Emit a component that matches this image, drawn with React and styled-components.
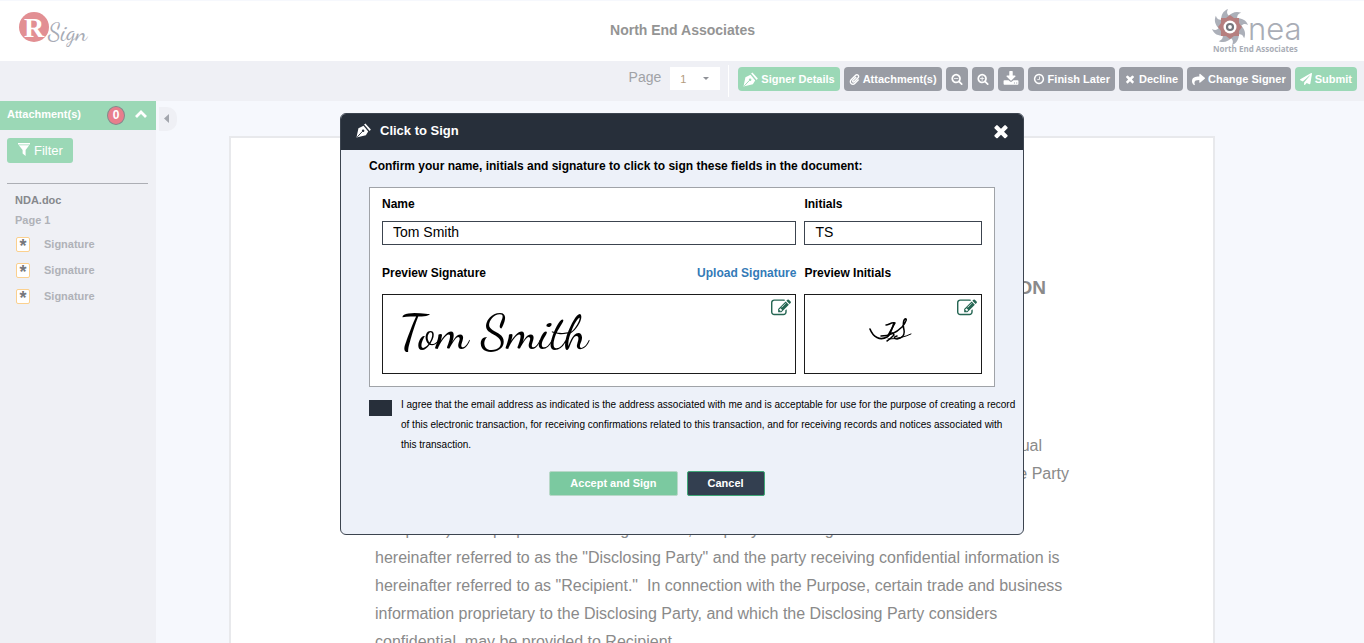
import React, { useState } from "react";
import styled, { createGlobalStyle } from "styled-components";
import { FaPaperclip, FaShare, FaPaperPlane } from "react-icons/fa";

const GlobalStyle = createGlobalStyle`
    * {
        box-sizing: border-box;
    }
    body {
        margin: 0;
        background: #f6f8fd;
        font-family: "Liberation Sans", Arial, sans-serif;
        overflow: hidden;
    }
    button, input, select {
        font-family: inherit;
    }
`;

const paths = {
    times: "M1490 1322q0 40-28 68l-136 136q-28 28-68 28t-68-28l-294-294-294 294q-28 28-68 28t-68-28l-136-136q-28-28-28-68t28-68l294-294-294-294q-28-28-28-68t28-68l136-136q28-28 68-28t68 28l294 294 294-294q28-28 68-28t68 28l136 136q28 28 28 68t-28 68l-294 294 294 294q28 28 28 68z",
    zoomOut: "M1088 800v64q0 13-9.5 22.5t-22.5 9.5h-576q-13 0-22.5-9.5t-9.5-22.5v-64q0-13 9.5-22.5t22.5-9.5h576q13 0 22.5 9.5t9.5 22.5zm128 32q0-185-131.5-316.5t-316.5-131.5-316.5 131.5-131.5 316.5 131.5 316.5 316.5 131.5 316.5-131.5 131.5-316.5zm512 832q0 53-37.5 90.5t-90.5 37.5q-54 0-90-38l-343-342q-179 124-399 124-143 0-273.5-55.5t-225-150-150-225-55.5-273.5 55.5-273.5 150-225 225-150 273.5-55.5 273.5 55.5 225 150 150 225 55.5 273.5q0 220-124 399l343 343q37 37 37 90z",
    zoomIn: "M1088 800v64q0 13-9.5 22.5t-22.5 9.5h-224v224q0 13-9.5 22.5t-22.5 9.5h-64q-13 0-22.5-9.5t-9.5-22.5v-224h-224q-13 0-22.5-9.5t-9.5-22.5v-64q0-13 9.5-22.5t22.5-9.5h224v-224q0-13 9.5-22.5t22.5-9.5h64q13 0 22.5 9.5t9.5 22.5v224h224q13 0 22.5 9.5t9.5 22.5zm128 32q0-185-131.5-316.5t-316.5-131.5-316.5 131.5-131.5 316.5 131.5 316.5 316.5 131.5 316.5-131.5 131.5-316.5zm512 832q0 53-37.5 90.5t-90.5 37.5q-54 0-90-38l-343-342q-179 124-399 124-143 0-273.5-55.5t-225-150-150-225-55.5-273.5 55.5-273.5 150-225 225-150 273.5-55.5 273.5 55.5 225 150 150 225 55.5 273.5q0 220-124 399l343 343q37 37 37 90z",
    clock: "M1024 544v448q0 14-9 23t-23 9h-320q-14 0-23-9t-9-23v-64q0-14 9-23t23-9h224v-352q0-14 9-23t23-9h64q14 0 23 9t9 23zm416 352q0-148-73-273t-198-198-273-73-273 73-198 198-73 273 73 273 198 198 273 73 273-73 198-198 73-273zm224 0q0 209-103 385.5t-279.5 279.5-385.5 103-385.5-103-279.5-279.5-103-385.5 103-385.5 279.5-279.5 385.5-103 385.5 103 279.5 279.5 103 385.5z",
    download: "M1344 1344q0-26-19-45t-45-19-45 19-19 45 19 45 45 19 45-19 19-45zm256 0q0-26-19-45t-45-19-45 19-19 45 19 45 45 19 45-19 19-45zm128-224v320q0 40-28 68t-68 28h-1472q-40 0-68-28t-28-68v-320q0-40 28-68t68-28h465l135 136q58 56 136 56t136-56l136-136h464q40 0 68 28t28 68zm-325-569q17 41-14 70l-448 448q-18 19-45 19t-45-19l-448-448q-31-29-14-70 17-39 59-39h256v-448q0-26 19-45t45-19h256q26 0 45 19t19 45v448h256q42 0 59 39z",
    edit: "M888 1184l116-116-152-152-116 116v56h96v96h56zm440-720q-16-16-33 1l-350 350q-17 17-1 33t33-1l350-350q17-17 1-33zm80 594v190q0 119-84.5 203.5t-203.5 84.5h-832q-119 0-203.5-84.5t-84.5-203.5v-832q0-119 84.5-203.5t203.5-84.5h832q63 0 117 25 15 7 18 23 3 17-9 29l-49 49q-14 14-32 8-23-6-45-6h-832q-66 0-113 47t-47 113v832q0 66 47 113t113 47h832q66 0 113-47t47-113v-126q0-13 9-22l64-64q15-15 35-7t20 29zm-96-738l288 288-672 672h-288v-288zm444 132l-92 92-288-288 92-92q28-28 68-28t68 28l152 152q28 28 28 68t-28 68z",
};

const Icon = ({ name, size = 12 }) => (
    <svg width={size} height={size} viewBox="0 0 1792 1792" fill="currentColor" aria-hidden="true">
        <path d={paths[name]} />
    </svg>
);

const PenIcon = ({ size = 16, ink }) => (
    <svg width={size} height={size} viewBox="0 0 16 16" aria-hidden="true">
        <path d="M0.5 15.5L2.6 5.5L8 3L13 9L10.5 13L0.5 15.5Z" fill="#fff" />
        <path d="M8.6 1.6L10 0.4L15.8 7L14.6 8.4Z" fill="#fff" />
        <path d="M1.4 14.8L7 8.8" stroke={ink} strokeWidth="1" />
        <circle cx="7.6" cy="8.2" r="1.3" fill={ink} />
    </svg>
);

const FilterIcon = () => (
    <svg width="12" height="13" viewBox="0 0 12 13" fill="#fff" aria-hidden="true">
        <path d="M0 0H12V1.5H0ZM0.8 2.3H11.2L7.6 7V13L4.6 10.6V7Z" />
    </svg>
);

const RSignLogo = () => (
    <svg width="70" height="46" viewBox="0 0 70 46" role="img" aria-label="RSign">
        <circle cx="15" cy="19" r="15" fill="#e28f93" />
        <text x="5" y="29" fontFamily="Liberation Serif" fontWeight="700" fontSize="28" fill="#fff">R</text>
        <text x="29" y="32" fontFamily="Dancing Script, cursive" fontSize="24" fill="#a7abb5">Sign</text>
    </svg>
);

const blades = [0, 45, 90, 135, 180, 225, 270, 315];

const NeaLogo = () => (
    <svg width="96" height="48" viewBox="0 0 96 48" role="img" aria-label="nea North End Associates">
        <g transform="translate(18 20)">
            {blades.map((angle) => (
                <path key={angle} d="M-9 -6C-9 -12 -7 -16 -2 -18C-4 -14 -3 -11 4 -9L0 0Z" fill="#acb0b9" transform={`rotate(${angle})`} />
            ))}
            <path d="M0 -12L4 -9L9 -9L9 -4L12 0L9 4L9 9L4 9L0 12L-4 9L-9 9L-9 4L-12 0L-9 -4L-9 -9L-4 -9Z" fill="#b67f7f" />
            <circle r="6.5" fill="#fff" />
            <circle r="3" fill="none" stroke="#74777d" strokeWidth="2.2" />
        </g>
        <text x="36" y="33" fontFamily="Inter, sans-serif" fontWeight="300" fontSize="31" fill="#a9adb6">nea</text>
        <text x="1" y="45" fontFamily="Open Sans, sans-serif" fontWeight="700" fontSize="8" fill="#a9adb6">North End Associates</text>
    </svg>
);

const InitialsMark = () => (
    <svg width="44" height="26" viewBox="0 0 44 26" fill="none" stroke="#000" strokeLinecap="round" strokeLinejoin="round" role="img" aria-label="TS">
        <path d="M1 11C4 19 11 23 18 19C22 16 23 10 25 5" strokeWidth="1.6" />
        <path d="M17 7C20 7 22 4 26 5C24 9 20 15 19 18C22 14 24 14 25 17C22 20 20 22 18 23" strokeWidth="1.5" />
        <path d="M12 18C20 18 27 15 33 9C38 3 38 0 36 1C34 2 34 8 35 12C36 18 33 20 28 21C25 21 24 19 28 18" strokeWidth="1.5" />
        <path d="M19 21C27 21 36 19 42 16" strokeWidth="1" />
    </svg>
);

const App = () => {
    const [name, setName] = useState("Tom Smith");
    const [initials, setInitials] = useState("TS");
    const [agreed, setAgreed] = useState(false);

    return (
        <Page>
            <GlobalStyle />
            <Header>
                <RSignLogo />
                <Company>North End Associates</Company>
                <NeaLogo />
            </Header>
            <Toolbar>
                <PageLabel htmlFor="page">Page</PageLabel>
                <PagePicker>
                    <select id="page" defaultValue="1">
                        <option>1</option>
                    </select>
                    <Caret />
                </PagePicker>
                <Divider />
                <ToolButton $green><PenIcon size={15} ink="#9bd8b6" />Signer Details</ToolButton>
                <ToolButton><FaPaperclip size={11} />Attachment(s)</ToolButton>
                <ToolButton aria-label="Zoom out"><Icon name="zoomOut" /></ToolButton>
                <ToolButton aria-label="Zoom in"><Icon name="zoomIn" /></ToolButton>
                <ToolButton aria-label="Download"><Icon name="download" size={16} /></ToolButton>
                <ToolButton><Icon name="clock" />Finish Later</ToolButton>
                <ToolButton><Icon name="times" />Decline</ToolButton>
                <ToolButton><FaShare size={13} />Change Signer</ToolButton>
                <ToolButton $green><FaPaperPlane size={12} />Submit</ToolButton>
            </Toolbar>
            <Main>
                <Sidebar>
                    <SidebarHead>
                        <span>Attachment(s)</span>
                        <Badge>0</Badge>
                        <svg width="12" height="8" viewBox="0 0 12 8" fill="none" stroke="#fff" strokeWidth="2.8" aria-hidden="true">
                            <path d="M1 7L6 2L11 7" />
                        </svg>
                    </SidebarHead>
                    <FilterButton><FilterIcon />Filter</FilterButton>
                    <Rule />
                    <FileName>NDA.doc</FileName>
                    <PageName>Page 1</PageName>
                    <FieldList>
                        {[1, 2, 3].map((field) => (
                            <li key={field}><Star>*</Star>Signature</li>
                        ))}
                    </FieldList>
                </Sidebar>
                <Collapse aria-label="Collapse sidebar">
                    <svg width="5" height="9" viewBox="0 0 5 9" fill="#a3a6ad" aria-hidden="true"><path d="M5 0V9L0 4.5Z" /></svg>
                </Collapse>
                <Viewer>
                    <Sheet>
                        <h1>INFORMATION</h1>
                        <LineEnd $inset={171}>mutual</LineEnd>
                        <LineEnd $inset={144}>the Party</LineEnd>
                        <p> </p>
                        <p>"Purpose").  For purposes of this Agreement, the party disclosing confidential information is</p>
                        <p>hereinafter referred to as the "Disclosing Party" and the party receiving confidential information is</p>
                        <p>hereinafter referred to as "Recipient."  In connection with the Purpose, certain trade and business</p>
                        <p>information proprietary to the Disclosing Party, and which the Disclosing Party considers</p>
                        <p>confidential, may be provided to Recipient.</p>
                    </Sheet>
                </Viewer>
            </Main>

            <Dialog role="dialog" aria-labelledby="dialog-title">
                <DialogHead>
                    <PenIcon size={15} ink="#272f3a" />
                    <h2 id="dialog-title">Click to Sign</h2>
                    <CloseButton aria-label="Close"><Icon name="times" size={20} /></CloseButton>
                </DialogHead>
                <DialogBody>
                    <Intro>Confirm your name, initials and signature to click to sign these fields in the document:</Intro>
                    <Fields>
                        <FieldLabel as="label" htmlFor="name">Name</FieldLabel>
                        <FieldLabel as="label" htmlFor="initials">Initials</FieldLabel>
                        <TextInput id="name" value={name} onChange={(e) => setName(e.target.value)} />
                        <TextInput id="initials" value={initials} onChange={(e) => setInitials(e.target.value)} />
                        <FieldLabel $preview>Preview Signature<a href="#upload">Upload Signature</a></FieldLabel>
                        <FieldLabel $preview>Preview Initials</FieldLabel>
                        <Preview>
                            <Signature>{name}</Signature>
                            <EditButton aria-label="Edit signature"><Icon name="edit" size={20} /></EditButton>
                        </Preview>
                        <Preview $center>
                            <InitialsMark />
                            <EditButton aria-label="Edit initials"><Icon name="edit" size={20} /></EditButton>
                        </Preview>
                    </Fields>
                    <Agree>
                        <input id="agree" type="checkbox" checked={agreed} onChange={() => setAgreed(!agreed)} />
                        <label htmlFor="agree">
                            I agree that the email address as indicated is the address associated with me and is acceptable for use for the purpose of creating a record of this electronic transaction, for receiving confirmations related to this transaction, and for receiving records and notices associated with this transaction.
                        </label>
                    </Agree>
                    <Actions>
                        <ActionButton $primary>Accept and Sign</ActionButton>
                        <ActionButton>Cancel</ActionButton>
                    </Actions>
                </DialogBody>
            </Dialog>
        </Page>
    );
};

const Page = styled.div`
    display: flex;
    flex-direction: column;
    height: 100vh;
    padding-top: 1px;
`;

const Header = styled.header`
    display: grid;
    grid-template-columns: 1fr auto 1fr;
    align-items: center;
    flex: none;
    height: 60px;
    padding: 0 56px 0 19px;
    background: #fff;
    > :last-child {
        justify-self: end;
    }
`;

const Company = styled.div`
    padding: 0 0 3px 38px;
    color: #949494;
    font-size: 14px;
    font-weight: 700;
`;

const Toolbar = styled.div`
    display: flex;
    justify-content: flex-end;
    gap: 4px;
    flex: none;
    height: 40px;
    padding: 6px 7px 0 0;
    background: #eff0f5;
`;

const PageLabel = styled.label`
    margin-right: 5px;
    color: #a0a2a6;
    font-size: 14px;
    line-height: 20px;
`;

const PagePicker = styled.div`
    display: grid;
    align-items: center;
    width: 50px;
    height: 23px;
    > * {
        grid-area: 1 / 1;
    }
    select {
        appearance: none;
        width: 100%;
        height: 100%;
        padding: 0 10px;
        border: 0;
        border-radius: 0;
        background: #fff;
        color: #b39b7c;
        font-size: 11px;
    }
`;

const Caret = styled.span`
    justify-self: end;
    margin-right: 11px;
    border: 3px solid transparent;
    border-top-color: #8f9197;
    border-bottom: 0;
    pointer-events: none;
`;

const Divider = styled.span`
    width: 1px;
    height: 32px;
    margin: -2px 5px 0 4px;
    background: #fff;
`;

const ToolButton = styled.button`
    display: flex;
    align-items: center;
    gap: 3px;
    height: 24px;
    padding: 0 5px;
    border: 0;
    border-radius: 4px;
    background: ${(props) => (props.$green ? "#9bd8b6" : "#999ca4")};
    color: #fff;
    font-size: 11px;
    font-weight: 700;
    white-space: nowrap;
`;

const Main = styled.main`
    display: flex;
    align-items: flex-start;
    flex: 1;
    min-height: 0;
`;

const Sidebar = styled.aside`
    display: flex;
    flex-direction: column;
    flex: none;
    width: 156px;
    height: 100%;
    background: #eff0f5;
    color: #b0b2b8;
    font-size: 11px;
    font-weight: 700;
`;

const SidebarHead = styled.div`
    display: flex;
    align-items: center;
    height: 29px;
    padding: 0 9px 3px 7px;
    background: #9bd8b6;
    color: #fff;
    span:first-child {
        flex: 1;
    }
`;

const Badge = styled.span`
    width: 18px;
    height: 19px;
    margin: 3px 10px 0 0;
    border: 1px solid #85888c;
    border-radius: 50%;
    background: #e87e8c;
    font-size: 12px;
    line-height: 17px;
    text-align: center;
`;

const FilterButton = styled.button`
    display: flex;
    align-items: center;
    gap: 4px;
    align-self: flex-start;
    height: 25px;
    margin: 8px 0 0 7px;
    padding: 0 10px 0 11px;
    border: 0;
    border-radius: 3px;
    background: #9bd8b6;
    color: #fff;
    font-size: 13px;
    svg {
        margin-bottom: 3px;
    }
`;

const Rule = styled.hr`
    width: 141px;
    margin: 20px 0 6px 7px;
    border: 0;
    border-top: 1px solid #acaeb4;
`;

const FileName = styled.div`
    padding-left: 15px;
    color: #86888c;
    line-height: 20px;
`;

const PageName = styled.div`
    padding-left: 15px;
    line-height: 20px;
`;

const FieldList = styled.ul`
    margin: 0;
    padding: 1px 0 0 16px;
    list-style: none;
    li {
        display: flex;
        align-items: center;
        gap: 14px;
        height: 26px;
    }
`;

const Star = styled.span`
    width: 14px;
    height: 15px;
    border: 1px solid #fbd08e;
    border-radius: 2px;
    background: #fff;
    color: #75777b;
    font-size: 18px;
    line-height: 16px;
    text-align: center;
`;

const Collapse = styled.button`
    display: flex;
    align-items: center;
    flex: none;
    width: 18px;
    height: 24px;
    margin: 6px 0 0 3px;
    padding: 0 0 2px 5px;
    border: 0;
    border-radius: 0 10px 10px 0;
    background: #eff0f5;
`;

const Viewer = styled.div`
    flex: 1;
    height: 100%;
    padding: 35px 149px 0 52px;
    overflow: hidden;
`;

const Sheet = styled.article`
    height: 100%;
    padding: 138px 0 0 144px;
    border: 2px solid #e8e9ec;
    border-bottom: 0;
    background: #fff;
    color: #8a8a8a;
    overflow: hidden;
    h1 {
        margin: 0 167px 132px 0;
        font-size: 19px;
        line-height: 24px;
        text-align: right;
    }
    p {
        margin: 0;
        font-size: 16px;
        line-height: 28px;
        white-space: pre;
    }
`;

const LineEnd = styled.p`
    padding-right: ${(props) => props.$inset}px;
    text-align: right;
`;

const Dialog = styled.section`
    position: fixed;
    top: 113px;
    left: 50%;
    width: 684px;
    margin-left: -342px;
    border: 1px solid #3c444f;
    border-radius: 6px;
    background: #edf1f9;
    color: #000;
    overflow: hidden;
`;

const DialogHead = styled.div`
    display: flex;
    align-items: center;
    gap: 9px;
    height: 36px;
    padding: 0 12px 3px 15px;
    background: #272f3a;
    color: #fff;
    h2 {
        flex: 1;
        margin: 0;
        font-size: 13px;
    }
`;

const CloseButton = styled.button`
    padding: 0;
    border: 0;
    background: none;
    color: #fff;
    line-height: 0;
`;

const DialogBody = styled.div`
    padding: 6px 28px 38px;
`;

const Intro = styled.p`
    margin: 0 0 11px;
    font-size: 12px;
    font-weight: 700;
    line-height: 20px;
`;

const Fields = styled.div`
    display: grid;
    grid-template-columns: 7fr 3fr;
    column-gap: 8px;
    padding: 6px 12px 12px;
    border: 1px solid #a0a3a8;
    background: #fff;
`;

const FieldLabel = styled.div`
    display: flex;
    justify-content: space-between;
    height: ${(props) => (props.$preview ? "49px" : "27px")};
    padding-top: ${(props) => (props.$preview ? "18px" : "0")};
    font-size: 12px;
    font-weight: 700;
    line-height: 20px;
    a {
        color: #337ab7;
        text-decoration: none;
    }
`;

const TextInput = styled.input`
    width: 100%;
    height: 24px;
    min-width: 0;
    padding: 0 10px 2px;
    border: 1px solid #3c444f;
    border-radius: 0;
    background: #fff;
    color: #000;
    font-size: 14px;
    outline: none;
`;

const Preview = styled.div`
    position: relative;
    display: flex;
    align-items: center;
    justify-content: ${(props) => (props.$center ? "center" : "flex-start")};
    height: 80px;
    padding: ${(props) => (props.$center ? "0 5px 6px 0" : "0 16px 4px")};
    border: 1px solid #1b1b1b;
`;

const Signature = styled.span`
    font-family: "Dancing Script", "Liberation Serif", cursive;
    font-size: 49px;
`;

const EditButton = styled.button`
    position: absolute;
    top: 3px;
    right: 4px;
    padding: 0;
    border: 0;
    background: none;
    color: #256653;
    line-height: 0;
`;

const Agree = styled.div`
    display: flex;
    align-items: flex-start;
    gap: 9px;
    margin: 8px -22px 0 0;
    font-size: 10px;
    line-height: 20px;
    input {
        appearance: none;
        flex: none;
        width: 23px;
        height: 16px;
        margin: 5px 0 0;
        background: #272f3a;
    }
`;

const Actions = styled.div`
    display: flex;
    justify-content: center;
    gap: 9px;
    margin-top: 16px;
    padding-right: 50px;
`;

const ActionButton = styled.button`
    height: 25px;
    padding: 0 20px 1px;
    border: 1px solid ${(props) => (props.$primary ? "#b9d8c9" : "#3fa777")};
    border-radius: 2px;
    background: ${(props) => (props.$primary ? "#7bc9a0" : "#333f50")};
    color: #fff;
    font-size: 11px;
    font-weight: 700;
`;

export default App;
